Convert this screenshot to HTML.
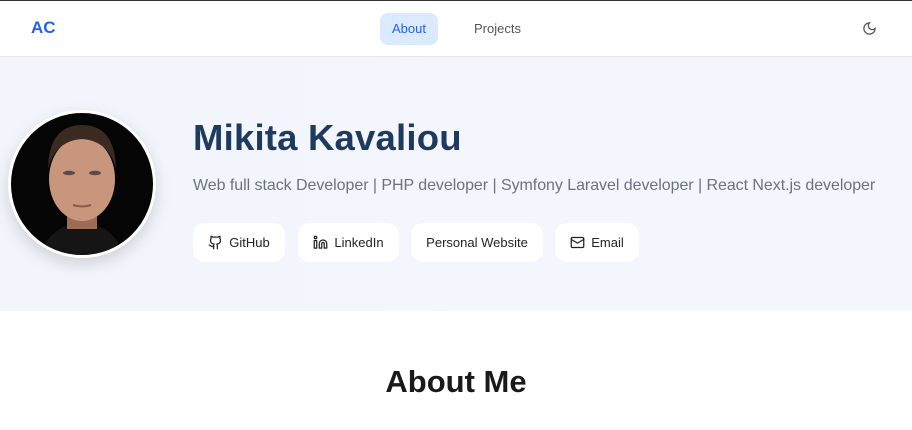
<!DOCTYPE html>
<html><head><meta charset="utf-8"><style>
*{margin:0;padding:0;box-sizing:border-box}
body{width:912px;height:430px;overflow:hidden;background:#fff;font-family:"Liberation Sans",sans-serif;position:relative}
.top{position:absolute;top:0;left:0;width:912px;height:1px;background:#333}
nav{position:absolute;top:1px;left:0;width:912px;height:56px;border-bottom:1px solid #e5e7eb;background:#fff}
.logo{position:absolute;left:31px;top:17px;font-size:17px;font-weight:bold;color:#2563eb}
.about{position:absolute;left:380px;top:12px;width:58px;height:32px;border-radius:8px;background:#dbeafe;color:#2563eb;font-size:13px;text-align:center;line-height:32px}
.proj{position:absolute;left:474px;top:12px;font-size:13px;color:#555;line-height:32px}
.moon{position:absolute;left:862px;top:20px}
.hero{position:absolute;top:57px;left:0;width:912px;height:254px;background:linear-gradient(90deg,#f2f5fc,#f4f6fd)}
.av{position:absolute;left:8px;top:110px;width:148px;height:148px;border-radius:50%;border:3px solid #fff;background:#050505;overflow:hidden;box-shadow:0 6px 16px rgba(0,0,0,.15)}
h1{position:absolute;left:193px;top:117px;font-size:36.5px;font-weight:bold;color:#1e3a5f;letter-spacing:.2px}
.sub{position:absolute;left:193px;top:177px;font-size:16px;color:#6b7280;white-space:nowrap;letter-spacing:-0.05px}
.btn{position:absolute;top:223px;height:39px;background:#fff;border-radius:12px;font-size:13px;color:#222;display:flex;align-items:center;justify-content:center;gap:6px}
h2{position:absolute;top:364px;left:0;width:912px;text-align:center;font-size:31px;font-weight:bold;color:#1a1a1a}
</style></head><body>
<div class="top"></div>
<nav><div class="logo">AC</div><div class="about">About</div><div class="proj">Projects</div>
<svg class="moon" width="15" height="15" viewBox="0 0 24 24" fill="none" stroke="#555" stroke-width="2" stroke-linecap="round"><path d="M12 3a6 6 0 0 0 9 9 9 9 0 1 1-9-9z"/></svg></nav>
<div class="hero"></div>
<div class="av"><svg width="142" height="142" viewBox="0 0 142 142">
<path d="M30 142 Q38 112 71 110 Q104 112 112 142Z" fill="#151515"/>
<rect x="56" y="92" width="30" height="24" fill="#9c6c56"/>
<ellipse cx="71" cy="66" rx="33" ry="42" fill="#c7967c"/>
<path d="M37 56 Q38 12 71 12 Q104 12 105 56 Q98 28 71 26 Q44 28 37 56Z" fill="#3a2a20"/>
<ellipse cx="58" cy="60" rx="6" ry="2.2" fill="#5a4a48"/><ellipse cx="84" cy="60" rx="6" ry="2.2" fill="#5a4a48"/>
<path d="M62 92 Q71 95 80 92" stroke="#8a5a48" stroke-width="2" fill="none"/>
</svg></div>
<h1>Mikita Kavaliou</h1>
<div class="sub">Web full stack Developer | PHP developer | Symfony Laravel developer | React Next.js developer</div>
<div class="btn" style="left:193px;width:92px"><svg width="15" height="15" viewBox="0 0 24 24" fill="none" stroke="#222" stroke-width="2" stroke-linecap="round" stroke-linejoin="round"><path d="M15 22v-4a4.8 4.8 0 0 0-1-3.5c3 0 6-2 6-5.5.08-1.25-.27-2.48-1-3.5.28-1.15.28-2.35 0-3.5 0 0-1 0-3 1.5-2.64-.5-5.36-.5-8 0C6 2 5 2 5 2c-.3 1.15-.3 2.35 0 3.5A5.4 5.4 0 0 0 4 9c0 3.5 3 5.5 6 5.5-.39.49-.68 1.05-.85 1.65S8.93 17.38 9 18v4"/><path d="M9 18c-4.51 2-5-2-7-2"/></svg>GitHub</div>
<div class="btn" style="left:298px;width:101px"><svg width="15" height="15" viewBox="0 0 24 24" fill="none" stroke="#222" stroke-width="2" stroke-linecap="round" stroke-linejoin="round"><path d="M16 8a6 6 0 0 1 6 6v7h-4v-7a2 2 0 0 0-4 0v7h-4v-7a6 6 0 0 1 6-6z"/><rect x="2" y="9" width="4" height="12"/><circle cx="4" cy="4" r="2"/></svg>LinkedIn</div>
<div class="btn" style="left:411px;width:132px">Personal Website</div>
<div class="btn" style="left:555px;width:84px"><svg width="15" height="15" viewBox="0 0 24 24" fill="none" stroke="#222" stroke-width="2" stroke-linecap="round" stroke-linejoin="round"><rect x="2" y="4" width="20" height="16" rx="2"/><path d="m22 7-10 6L2 7"/></svg>Email</div>
<h2>About Me</h2>
</body></html>
